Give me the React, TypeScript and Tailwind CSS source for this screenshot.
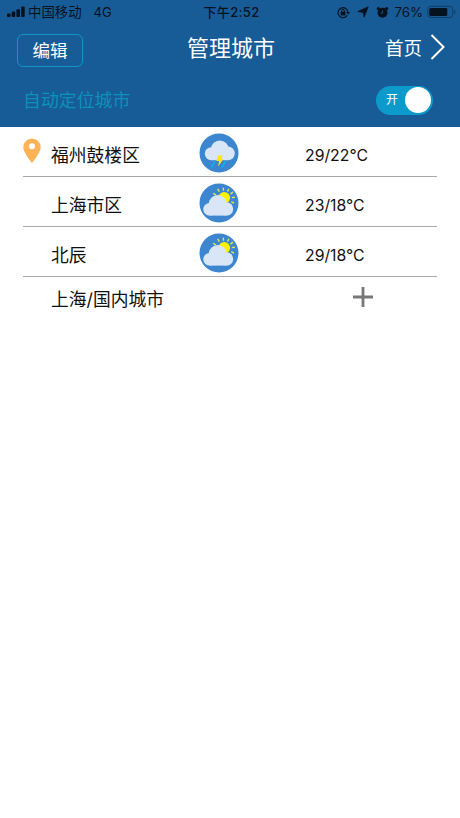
import React from "react";

type Weather = "storm" | "partly";

interface City {
  name: string;
  temp: string;
  weather: Weather;
  located?: boolean;
}

const cities: City[] = [
  { name: "福州鼓楼区", temp: "29/22°C", weather: "storm", located: true },
  { name: "上海市区", temp: "23/18°C", weather: "partly" },
  { name: "北辰", temp: "29/18°C", weather: "partly" },
];

function StormIcon() {
  return (
    <svg width="40" height="40" viewBox="0 0 40 40">
      <circle cx="20" cy="20" r="19.5" fill="#3b86cf" />
      <g fill="#d8e6f7">
        <circle cx="12.300" cy="20.700" r="6.500" />
        <circle cx="20.800" cy="16.300" r="8.900" />
        <circle cx="28.900" cy="20.300" r="6.900" />
        <rect x="12" y="19" width="17" height="8.200" />
      </g>
      <path d="M19 22.500h4.500l-1 3.700h1.700l-5 7.300.9-5.500h-2.800z" fill="#fbe616" />
      <path d="M15.600 28.800l-1.300 2.400M13.800 32.200l-.8 1.600M26.200 28.800l-1.300 2.400M24.200 32.200l-.9 1.600" stroke="#0fb0f0" strokeWidth="1.700" strokeLinecap="round" />
    </svg>
  );
}

function PartlyIcon() {
  return (
    <svg width="40" height="40" viewBox="0 0 40 40">
      <circle cx="20" cy="20" r="19.5" fill="#3b86cf" />
      <circle cx="25.200" cy="14.800" r="5.900" fill="#fff200" />
      <path
        d="M14.200 10.300l2.700 1.600M18.700 5.900l1.600 2.700M24.300 4.700l.2 3M29.800 5.700l-1.200 2.800M34 9l-2.500 2.100M35.900 14.300l-3.100.3M35 20.200l-2.700-1.500"
        stroke="#e6e94b"
        strokeWidth="1.400"
      />
      <g fill="#d8e6f7">
        <circle cx="10.600" cy="26.300" r="6.300" />
        <circle cx="18.700" cy="21" r="9" />
        <circle cx="27.500" cy="25.900" r="6.700" />
        <rect x="10.500" y="24" width="17" height="8.600" />
      </g>
    </svg>
  );
}

function PinIcon() {
  return (
    <svg width="18" height="26" viewBox="0 0 18 26">
      <path
        fillRule="evenodd"
        fill="#ffb357"
        d="M9 .5a8.700 8.700 0 0 0-8.700 8.700C.3 14.500 9 25 9 25s8.700-10.500 8.700-15.800A8.700 8.700 0 0 0 9 .5zM9 5.300a3 3 0 1 1 0 6 3 3 0 0 1 0-6z"
      />
    </svg>
  );
}

function StatusBar() {
  return (
    <div className="grid h-6 grid-cols-[1fr_auto_1fr] items-center pl-[7px] pr-[4px] text-[13px] leading-6 text-[#07121f]">
      <div className="flex items-center">
        <svg width="18" height="12" viewBox="0 0 18 12" fill="currentColor">
          <rect x="0" y="7.500" width="3.600" height="3.500" rx="1" />
          <rect x="4.700" y="5.500" width="3.600" height="5.500" rx="1" />
          <rect x="9.400" y="3.200" width="3.600" height="7.800" rx="1" />
          <rect x="14.100" y="0.500" width="3.600" height="10.500" rx="1" />
        </svg>
        <span className="ml-[3px] text-[13.400px]">中国移动</span>
        <span className="ml-[12px]">4G</span>
      </div>
      <span className="font-medium tracking-[0.350px]">下午2:52</span>
      <div className="flex items-center justify-end">
        <svg width="13" height="13" viewBox="0 0 13 13" fill="none" stroke="currentColor" strokeWidth="1.200">
          <path d="M10.300 9.300A5 5 0 1 1 11 6.500" />
          <path d="M9 6h4l-1.900 2.600z" fill="currentColor" stroke="none" />
          <rect x="3.600" y="5.700" width="4.800" height="3.700" fill="currentColor" stroke="none" />
          <path d="M4.700 6V4.700a1.300 1.300 0 0 1 2.600 0V6" strokeWidth="1" />
        </svg>
        <svg className="ml-[7px]" width="12" height="12" viewBox="0 0 12 12" fill="currentColor">
          <path d="M11.200.8L7.200 11.200 6.100 6.400.8 5.500z" stroke="currentColor" strokeWidth="0.700" strokeLinejoin="round" />
        </svg>
        <svg className="ml-[7px]" width="13" height="13" viewBox="0 0 13 13" fill="currentColor">
          <circle cx="6.500" cy="6.800" r="5" />
          <circle cx="2.300" cy="2.500" r="1.600" />
          <circle cx="10.700" cy="2.500" r="1.600" />
          <path d="M6.500 4.500v2.600H4.700" fill="none" stroke="#175b96" strokeWidth="0.900" />
        </svg>
        <span className="ml-[5px] text-[13.300px]">76%</span>
        <svg className="ml-[4px]" width="29" height="14" viewBox="0 0 29 14">
          <rect x="0.700" y="1.300" width="25" height="11.200" rx="3" fill="none" stroke="#103d68" />
          <rect x="2.300" y="2.900" width="18" height="8" rx="1.300" fill="#07121f" />
          <path d="M27 4.700c1.800.7 1.800 3.600 0 4.300z" fill="#103d68" />
        </svg>
      </div>
    </div>
  );
}

export default function App() {
  return (
    <main className="h-[818px] w-[460px] overflow-hidden bg-white font-['Inter','Noto_Sans_CJK_SC',sans-serif] text-[#111]">
      <header className="h-[127px] bg-[#175c97]">
        <StatusBar />
        <nav className="grid h-[49px] grid-cols-[1fr_auto_1fr] items-center pl-[17px] pr-[15px] text-white">
          <button className="mt-[3px] flex h-[33px] w-[66px] items-center justify-center rounded-[6px] border-[1.500px] border-[#1295c6] pt-[2px] text-[17.500px] leading-none">
            编辑
          </button>
          <h1 className="-mt-[2px] text-[22px] leading-[48px] font-normal">管理城市</h1>
          <button className="-mt-[2px] flex items-center justify-end text-[18.500px] leading-[48px]">
            首页
            <svg className="-mt-[2px] ml-[8px]" width="15" height="26" viewBox="0 0 15 26" fill="none" stroke="#fff" strokeWidth="2">
              <path d="M1.500 1l12 12-12 12" />
            </svg>
          </button>
        </nav>
        <div className="flex h-[54px] items-center justify-between pl-[23px] pr-[27px]">
          <span className="mt-[1px] text-[17.900px] leading-none text-[#0d91bb]">自动定位城市</span>
          <button className="flex h-[29px] w-[57px] items-center justify-between rounded-full bg-[#0c9acb] pl-[10px] pr-[2px] text-white">
            <span className="text-xs leading-none">开</span>
            <span className="size-[26px] rounded-full bg-white" />
          </button>
        </div>
      </header>
      <ul className="px-[23px]">
        {cities.map((city) => (
          <li key={city.name} className="grid h-[50px] grid-cols-[28px_148px_106px_1fr] items-center border-b border-[#aaa]">
            <span className="-mt-[2px]">{city.located && <PinIcon />}</span>
            <span className="mt-[8px] text-[17.800px] leading-6">{city.name}</span>
            <span className="mt-[2px]">{city.weather === "storm" ? <StormIcon /> : <PartlyIcon />}</span>
            <span className="mt-[8px] text-[15.800px] leading-6">{city.temp}</span>
          </li>
        ))}
        <li className="flex h-[46px] items-center pl-[28px]">
          <span className="w-[302px] text-[17.800px] leading-6">上海/国内城市</span>
          <svg className="-mt-[6px]" width="20" height="20" viewBox="0 0 20 20" stroke="#777" strokeWidth="2.800">
            <path d="M10 0v20M0 10h20" />
          </svg>
        </li>
      </ul>
    </main>
  );
}
